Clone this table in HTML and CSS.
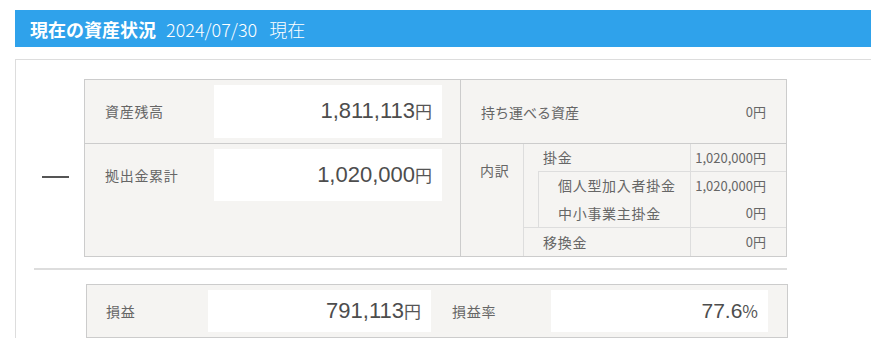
FILE: index.html
```html
<!DOCTYPE html>
<html>
    <head>
        <meta charset="utf-8">
        <title>資産状況</title>
        <link rel="stylesheet" href="styles.css">
    </head>
  <body>
    <h2 class="heading">
        <span class="heading-title">現在の資産状況</span>
        <span class="heading-date">2024/07/30<span class="heading-now">現在</span></span>
    </h2>
    <div class="panel">
        <div class="calc">
            <div class="op"><span class="minus"></span></div>
            <div class="summary">
                <div class="cell left top">
                    <span class="label">資産残高</span>
                    <div class="value-box"><span class="num">1,811,113</span><span class="unit">円</span></div>
                </div>
                <div class="cell right top">
                    <span class="label">持ち運べる資産</span>
                    <span class="small-val">0円</span>
                </div>
                <div class="cell left">
                    <span class="label">拠出金累計</span>
                    <div class="value-box"><span class="num">1,020,000</span><span class="unit">円</span></div>
                </div>
                <div class="cell right breakdown">
                    <div class="uchiwake">内訳</div>
                    <div class="items">
                        <div class="item">
                            <span class="name">掛金</span>
                            <span class="val">1,020,000円</span>
                        </div>
                        <div class="group">
                            <div class="item">
                                <span class="name">個人型加入者掛金</span>
                                <span class="val">1,020,000円</span>
                            </div>
                            <div class="item">
                                <span class="name">中小事業主掛金</span>
                                <span class="val">0円</span>
                            </div>
                        </div>
                        <div class="item last">
                            <span class="name">移換金</span>
                            <span class="val">0円</span>
                        </div>
                    </div>
                </div>
            </div>
        </div>
        <div class="sep"></div>
        <div class="result">
            <span class="label">損益</span>
            <div class="value-box profit"><span class="num">791,113</span><span class="unit">円</span></div>
            <span class="label rate-label">損益率</span>
            <div class="value-box rate"><span class="num">77.6</span><span class="unit">%</span></div>
        </div>
    </div>
  </body>
</html>
```

FILE: styles.css
```css
* {
    margin: 0;
    padding: 0;
    box-sizing: border-box;
}
body {
    font: 14px "Noto Sans CJK JP", sans-serif;
    color: #666;
    background: #fff;
    overflow: hidden;
}
/* 見出しバー */
.heading {
    display: flex;
    align-items: center;
    height: 37px;
    margin: 10px 0 0 15px;
    padding-left: 15px;
    background: #2fa2eb;
    color: #fff;
    font-weight: normal;
}
.heading-title {
    font-size: 18px;
    font-weight: bold;
}
.heading-date {
    margin-left: 10px;
    font-size: 18px;
    font-weight: 300;
}
.heading-now {
    margin-left: 12px;
}
.panel {
    margin: 12px 0 0 15px;
    padding: 19px 0 0 18px;
    border-top: 1px solid #ddd;
    border-left: 1px solid #ddd;
}
.calc {
    display: flex;
    width: 753px;
}
.op {
    width: 50px;
    padding: 97px 0 0 8px;
}
.minus {
    display: block;
    width: 27px;
    height: 2px;
    background: #555;
}
/* 資産残高・拠出金累計の表 */
.summary {
    display: grid;
    grid-template-columns: 376px 1fr;
    width: 703px;
    border: 1px solid #ccc;
    background: #f5f4f2;
}
.cell {
    display: flex;
}
.cell.top {
    height: 64px;
    border-bottom: 1px solid #ccc;
}
.cell.left {
    align-items: flex-start;
    padding: 5px 18px 5px 0;
    border-right: 1px solid #ccc;
}
.cell.left .label {
    width: 129px;
    padding-left: 20px;
    line-height: 52px;
    letter-spacing: .05em;
}
.cell.right {
    align-items: center;
    justify-content: space-between;
    padding: 0 20px;
}
.value-box {
    display: flex;
    align-items: baseline;
    justify-content: flex-end;
    width: 228px;
    height: 52px;
    padding: 10px 10px 0 0;
    background: #fff;
    color: #4d4d4d;
}
.cell.top .value-box {
    height: 53px;
}
.num {
    font: 22px "Liberation Sans", Arial, sans-serif;
    line-height: 32px;
}
.unit {
    font-size: 17px;
    color: #555;
}
.small-val {
    font-size: 13px;
    color: #666;
}
/* 内訳 */
.cell.breakdown {
    align-items: stretch;
    padding: 0;
    letter-spacing: .05em;
}
.uchiwake {
    width: 63px;
    padding: 16px 0 0 19px;
    border-right: 1px solid #ddd;
    line-height: 20px;
}
.items {
    flex: 1;
}
.item {
    display: flex;
    height: 27px;
    line-height: 27px;
}
.item .name {
    flex: 1;
    padding-left: 19px;
}
.item .val {
    width: 96px;
    padding-right: 20px;
    border-left: 1px solid #ddd;
    text-align: right;
    font-size: 13px;
    white-space: nowrap;
    letter-spacing: 0;
    direction: rtl;
}
.group {
    margin-left: 14px;
    border-top: 1px solid #ddd;
    border-left: 1px solid #ddd;
}
.group .item + .item {
    height: 28px;
    line-height: 28px;
}
.item.last {
    height: 29px;
    line-height: 28px;
    border-top: 1px solid #ddd;
}
.sep {
    width: 753px;
    height: 2px;
    margin-top: 11px;
    background: #ddd;
}
/* 損益 */
.result {
    display: flex;
    align-items: center;
    width: 702px;
    margin: 14px 0 0 52px;
    padding: 5px 0;
    border: 1px solid #ccc;
    background: #f5f4f2;
}
.result .label {
    width: 121px;
    padding-left: 19px;
    letter-spacing: .05em;
}
.result .value-box {
    height: 42px;
    padding-top: 5px;
}
.result .profit {
    width: 223px;
}
.result .rate-label {
    width: 120px;
    padding-left: 21px;
}
.result .rate {
    width: 217px;
}
.rate .num {
    font-size: 21px;
}
```
